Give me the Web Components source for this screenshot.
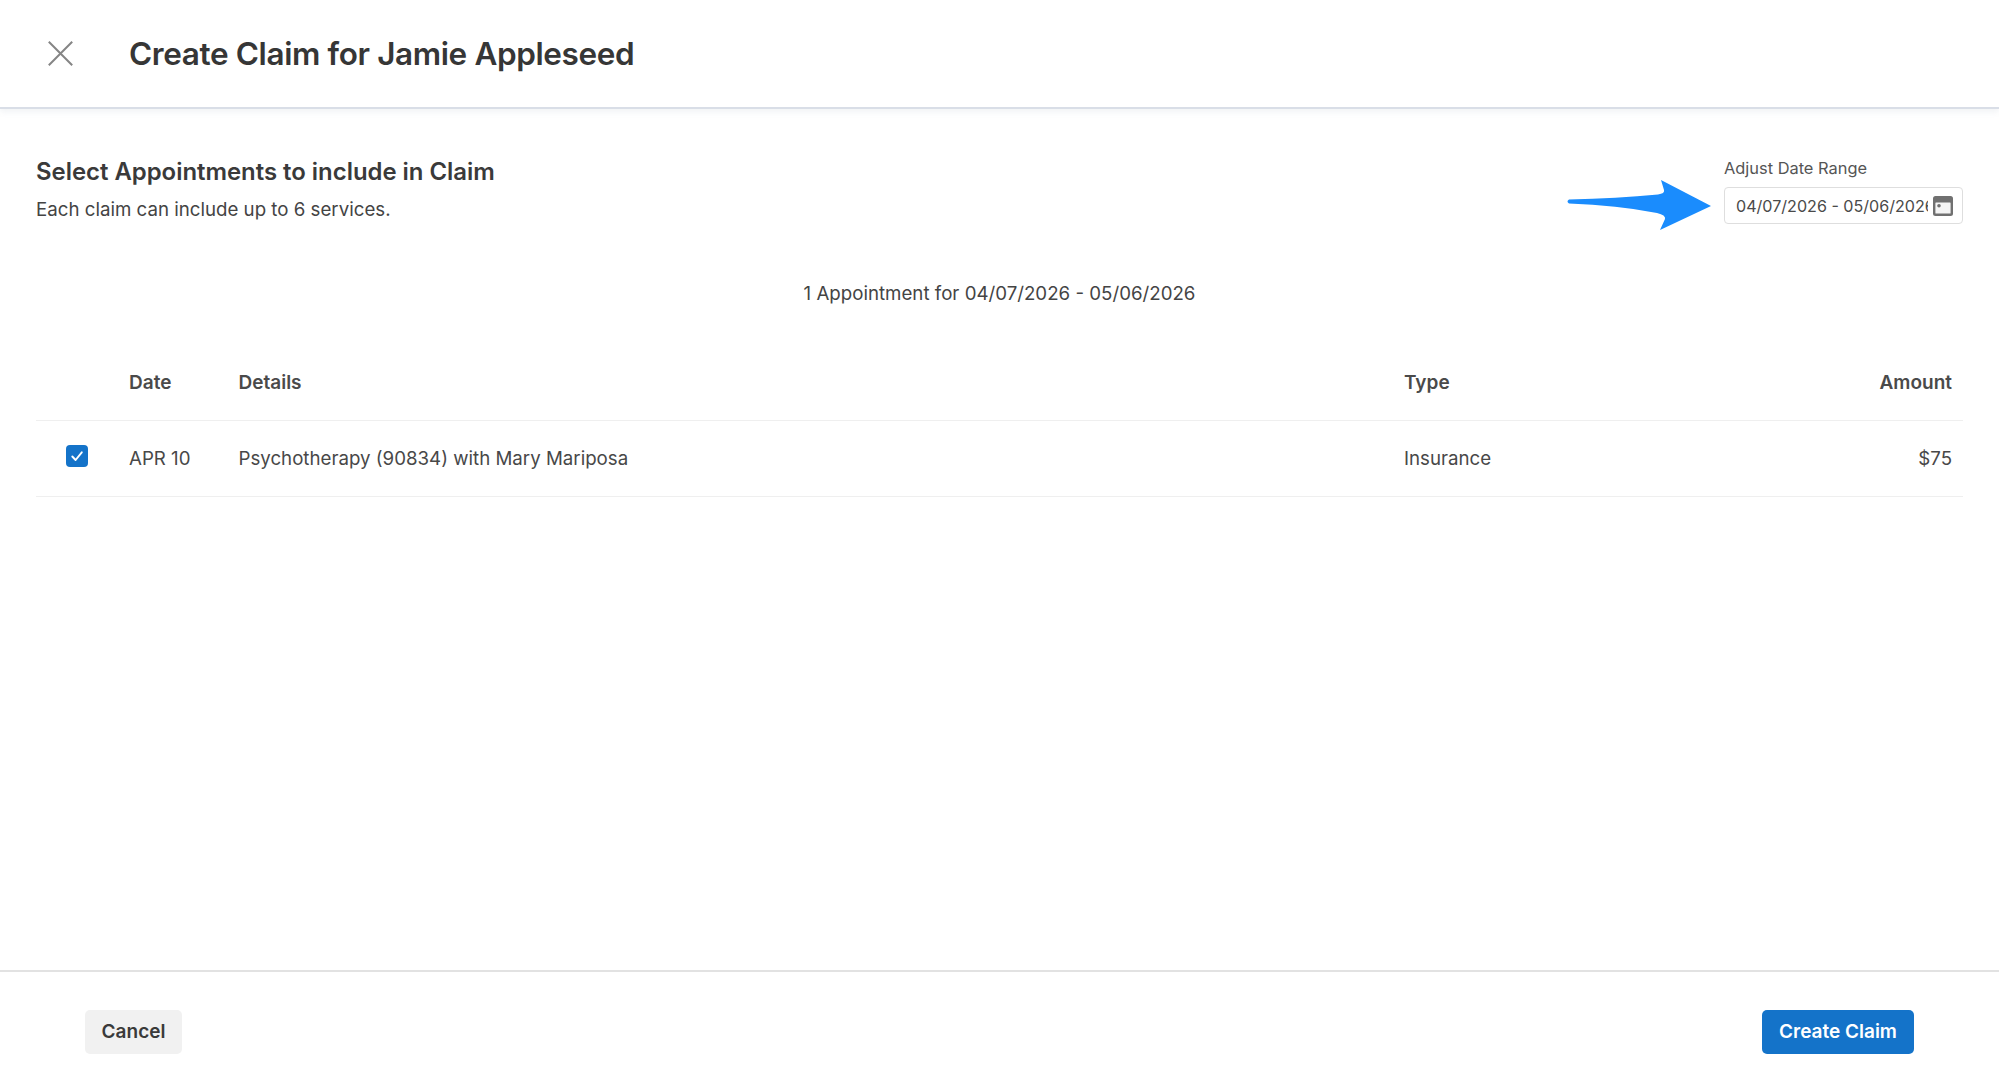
<!DOCTYPE html>
<html lang="en"><head><meta charset="utf-8"><title>Create Claim</title>
<style>
html,body{margin:0;height:100%;background:#fff}
body{font-family:Inter,"Liberation Sans",sans-serif;color:#3f3f3f}
</style></head><body>
<claim-app>
  <claim-header slot="header">Create Claim for Jamie Appleseed</claim-header>
  <claim-intro slot="intro" title-text="Select Appointments to include in Claim" sub-text="Each claim can include up to 6 services.">
    <date-field label="Adjust Date Range" value="04/07/2026 - 05/06/2026"></date-field>
  </claim-intro>
  <range-note slot="note">1 Appointment for 04/07/2026 - 05/06/2026</range-note>
  <appt-table slot="table">
    <appt-row head date="Date" details="Details" type="Type" amount="Amount"></appt-row>
    <appt-row checked date="APR 10" details="Psychotherapy (90834) with Mary Mariposa" type="Insurance" amount="$75"></appt-row>
  </appt-table>
  <claim-footer slot="footer">
    <claim-button>Cancel</claim-button>
    <claim-button primary>Create Claim</claim-button>
  </claim-footer>
</claim-app>
<script>
function def(name,html){
  customElements.define(name,class extends HTMLElement{
    connectedCallback(){
      if(this.shadowRoot)return;
      const r=this.attachShadow({mode:'open'});
      r.innerHTML=typeof html==='function'?html(this):html;
    }
  });
}
const F='Inter,"Liberation Sans",sans-serif';
def('claim-app',`<style>
:host{display:flex;flex-direction:column;height:1088px;overflow:hidden;box-sizing:border-box}
main{flex:1;display:flex;flex-direction:column;padding:0 36px;min-height:0}
</style>
<slot name="header"></slot>
<main><slot name="intro"></slot><slot name="note"></slot><slot name="table"></slot></main>
<slot name="footer"></slot>`);
def('claim-header',`<style>
:host{display:flex;align-items:center;height:107px;flex:none;border-bottom:2px solid #d9dee7;box-shadow:0 3px 6px rgba(120,135,160,.10);box-sizing:content-box}
svg{width:25px;height:25px;margin-left:48px;margin-right:56px;flex:none;display:block}
h1{margin:0;font:600 31.5px/40px ${F};color:#363636;letter-spacing:-.38px}
</style>
<svg viewBox="0 0 25 25" aria-hidden="true"><path d="M.8.8 24.2 24.2M24.2.8.8 24.2" fill="none" stroke="#858585" stroke-width="2"/></svg>
<h1><slot></slot></h1>`);
def('claim-intro',h=>`<style>
:host{display:flex;justify-content:space-between;align-items:flex-start;padding-top:47px;height:132px;box-sizing:border-box;flex:none}
h2{margin:0;font:600 23.9px/32px ${F};color:#3a3a3a}
p{margin:8px 0 0;font:400 18.7px/28px ${F};color:#444}
.right{display:flex;align-items:flex-start}
svg{width:144px;height:50px;margin:24px 13px 0 0;display:block;overflow:visible;flex:none}
</style>
<div><h2>${h.getAttribute('title-text')}</h2><p>${h.getAttribute('sub-text')}</p></div>
<div class="right">
<svg viewBox="0 0 144 50" aria-hidden="true"><path d="M2 19.500Q50 18.500 91 14.500Q98 13.500 97 10L94 0 144 26 93 50 98 39Q99 35 90 33Q50 25 2 23.500Q-1 21.500 2 19.500Z" fill="#1a8cfd"/></svg>
<slot></slot></div>`);
def('date-field',h=>`<style>
:host{display:flex;flex-direction:column;width:239px}
label{font:400 16.4px/24px ${F};color:#555;margin-bottom:7px}
.box{display:flex;align-items:center;height:37px;box-sizing:border-box;border:1px solid #dedede;border-radius:4px;padding:0 9px 0 11px;background:#fff}
.v{flex:1;min-width:0;overflow:hidden;white-space:nowrap;font:400 16.1px/24px ${F};color:#4a4a4a;margin-right:5px}
svg{width:20px;height:20px;flex:none;display:block}
</style>
<label>${h.getAttribute('label')}</label>
<div class="box"><div class="v">${h.getAttribute('value')}</div>
<svg viewBox="0 0 20 20" aria-hidden="true"><rect width="20" height="20" rx="2.500" fill="#707070"/><rect x="2.400" y="6.400" width="15.200" height="11.200" rx=".6" fill="#f4f4f4"/><circle cx="6" cy="9.800" r="1.800" fill="#707070"/></svg></div>`);
def('range-note',`<style>
:host{display:block;text-align:center;font:400 18.7px/28px ${F};color:#444;margin-top:39px;flex:none}
</style><slot></slot>`);
def('appt-table',`<style>:host{display:block;margin-top:37px;flex:none}</style><slot></slot>`);
def('appt-row',h=>{
  const head=h.hasAttribute('head');
  const chk=h.hasAttribute('checked')?`<span class="cb"><svg viewBox="0 0 22 22" aria-hidden="true"><path d="M6.300 11.500 9.600 15 15.800 7.300" fill="none" stroke="#fff" stroke-width="1.900" stroke-linecap="round" stroke-linejoin="round"/></svg></span>`:'';
  return `<style>
:host{display:grid;grid-template-columns:93px 109.5px 1165.5px 1fr;align-items:center;border-bottom:1px solid #efefef;box-sizing:border-box;height:76px;font:${head?'600 19px':'400 18.7px'}/28px ${F};color:${head?'#4a4a4a':'#484848'}}
.c0{padding-left:29.5px;height:22px;margin-top:-6px}
.cb{display:block;width:22px;height:22px;border-radius:4px;background:#1473c9}
svg{display:block;width:22px;height:22px}
.e{display:flex;justify-content:space-between;padding-right:11px}
</style>
<div class="c0">${chk}</div><div>${h.getAttribute('date')}</div>
<div>${h.getAttribute('details')}</div>
<div class="e"><span>${h.getAttribute('type')}</span><span>${h.getAttribute('amount')}</span></div>`;
});
def('claim-footer',`<style>
:host{display:flex;justify-content:space-between;align-items:center;flex:none;height:118px;border-top:2px solid #e2e2e2;box-sizing:border-box;padding:3px 85px 0 85px}
</style><slot></slot>`);
def('claim-button',h=>{
  const p=h.hasAttribute('primary');
  return `<style>
:host{display:inline-flex;align-items:center;justify-content:center;height:44px;width:${p?152:97}px;border-radius:5px;background:${p?'#1473c9':'#f1f1f1'};color:${p?'#fff':'#3a3a3a'};font:600 19px/24px ${F}}
</style><slot></slot>`;
});
</script>
</body></html>
